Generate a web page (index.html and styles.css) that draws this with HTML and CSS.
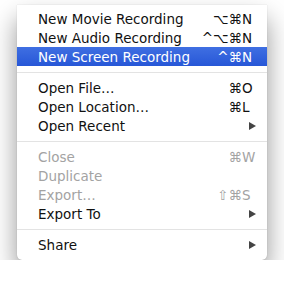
FILE: index.html
```html
<!DOCTYPE html>
<html lang="en">
<head>
    <meta charset="UTF-8">
    <title>File menu</title>
    <link rel="stylesheet" href="styles.css">
</head>
<body>
    <div class="menu">
        <div class="item"><span class="label">New Movie Recording</span><span class="mods">⌥⌘</span><span class="key">N</span></div>
        <div class="item"><span class="label">New Audio Recording</span><span class="mods">^⌥⌘</span><span class="key">N</span></div>
        <div class="item active"><span class="label">New Screen Recording</span><span class="mods">^⌘</span><span class="key">N</span></div>
        <div class="sep"></div>
        <div class="item"><span class="label">Open File…</span><span class="mods">⌘</span><span class="key">O</span></div>
        <div class="item"><span class="label">Open Location…</span><span class="mods">⌘</span><span class="key">L</span></div>
        <div class="item"><span class="label">Open Recent</span><span class="arrow"></span></div>
        <div class="sep"></div>
        <div class="item disabled"><span class="label">Close</span><span class="mods">⌘</span><span class="key">W</span></div>
        <div class="item disabled"><span class="label">Duplicate</span></div>
        <div class="item disabled"><span class="label">Export…</span><span class="mods">⇧⌘</span><span class="key">S</span></div>
        <div class="item"><span class="label">Export To</span><span class="arrow"></span></div>
        <div class="sep"></div>
        <div class="item"><span class="label">Share</span><span class="arrow"></span></div>
    </div>
</body>
</html>
```

FILE: styles.css
```css
body {
    margin: 0;
    background: #fff;
    font-family: "DejaVu Sans", sans-serif;
    font-size: 13.5px;
}
.menu {
    margin: 5px 0 0 17px;
    width: 250px;
    padding: 4px 0 6px;
    background: #fff;
    border-radius: 0 0 5px 5px;
    box-shadow: 0 0 1px rgba(0, 0, 0, 0.3), 0 14px 26px rgba(0, 0, 0, 0.42);
}
.item {
    display: flex;
    align-items: center;
    height: 19px;
    padding: 0 11px 0 21px;
    color: #111;
}
.item .label {
    flex: 1;
}
.item .mods {
    text-align: right;
}
.item .key {
    width: 14px;
}
.item.active {
    background: linear-gradient(#3f6fe2, #2757d7);
    color: #fff;
}
.item.disabled {
    color: #a3a3a3;
}
.arrow {
    width: 0;
    height: 0;
    border-top: 4px solid transparent;
    border-bottom: 4px solid transparent;
    border-left: 7px solid #444;
}
.sep {
    height: 12px;
    display: flex;
    align-items: center;
}
.sep::before {
    content: "";
    flex: 1;
    height: 1px;
    background: #e3e3e3;
}
```
